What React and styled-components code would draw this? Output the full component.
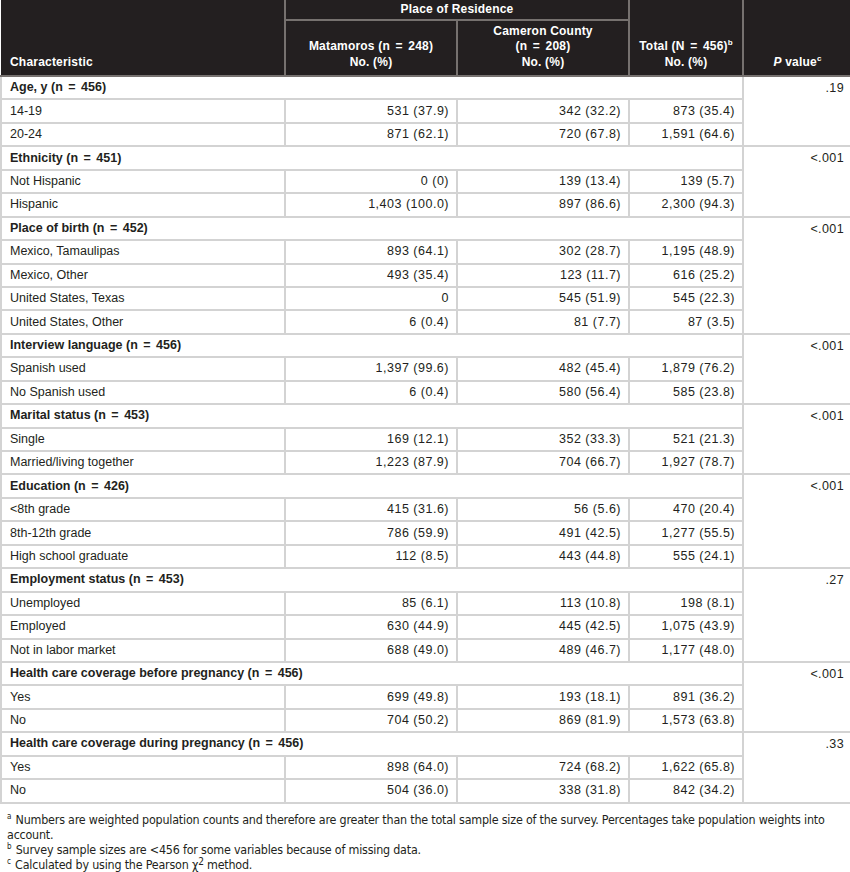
import React from 'react';
import styled, { createGlobalStyle } from 'styled-components';

const groups = [
  { title: 'Age, y (n = 456)', p: '.19', rows: [
    ['14-19', '531 (37.9)', '342 (32.2)', '873 (35.4)'],
    ['20-24', '871 (62.1)', '720 (67.8)', '1,591 (64.6)'],
  ] },
  { title: 'Ethnicity (n = 451)', p: '<.001', rows: [
    ['Not Hispanic', '0 (0)', '139 (13.4)', '139 (5.7)'],
    ['Hispanic', '1,403 (100.0)', '897 (86.6)', '2,300 (94.3)'],
  ] },
  { title: 'Place of birth (n = 452)', p: '<.001', rows: [
    ['Mexico, Tamaulipas', '893 (64.1)', '302 (28.7)', '1,195 (48.9)'],
    ['Mexico, Other', '493 (35.4)', '123 (11.7)', '616 (25.2)'],
    ['United States, Texas', '0', '545 (51.9)', '545 (22.3)'],
    ['United States, Other', '6 (0.4)', '81 (7.7)', '87 (3.5)'],
  ] },
  { title: 'Interview language (n = 456)', p: '<.001', rows: [
    ['Spanish used', '1,397 (99.6)', '482 (45.4)', '1,879 (76.2)'],
    ['No Spanish used', '6 (0.4)', '580 (56.4)', '585 (23.8)'],
  ] },
  { title: 'Marital status (n = 453)', p: '<.001', rows: [
    ['Single', '169 (12.1)', '352 (33.3)', '521 (21.3)'],
    ['Married/living together', '1,223 (87.9)', '704 (66.7)', '1,927 (78.7)'],
  ] },
  { title: 'Education (n = 426)', p: '<.001', rows: [
    ['<8th grade', '415 (31.6)', '56 (5.6)', '470 (20.4)'],
    ['8th-12th grade', '786 (59.9)', '491 (42.5)', '1,277 (55.5)'],
    ['High school graduate', '112 (8.5)', '443 (44.8)', '555 (24.1)'],
  ] },
  { title: 'Employment status (n = 453)', p: '.27', rows: [
    ['Unemployed', '85 (6.1)', '113 (10.8)', '198 (8.1)'],
    ['Employed', '630 (44.9)', '445 (42.5)', '1,075 (43.9)'],
    ['Not in labor market', '688 (49.0)', '489 (46.7)', '1,177 (48.0)'],
  ] },
  { title: 'Health care coverage before pregnancy (n = 456)', p: '<.001', rows: [
    ['Yes', '699 (49.8)', '193 (18.1)', '891 (36.2)'],
    ['No', '704 (50.2)', '869 (81.9)', '1,573 (63.8)'],
  ] },
  { title: 'Health care coverage during pregnancy (n = 456)', p: '.33', rows: [
    ['Yes', '898 (64.0)', '724 (68.2)', '1,622 (65.8)'],
    ['No', '504 (36.0)', '338 (31.8)', '842 (34.2)'],
  ] },
];

const GlobalStyle = createGlobalStyle`
  body {
    margin: 0;
    background: #fff;
    color: #231f20;
    font-family: 'Liberation Sans', Arial, sans-serif;
  }
`;

const Table = styled.table`
  width: 850px;
  table-layout: fixed;
  border-collapse: collapse;
  font-size: 12.5px;
`;

const HeadCell = styled.th`
  background: #231f20;
  color: #fff;
  font-size: 12px;
  font-weight: 700;
  letter-spacing: 0.2px;
  line-height: 15.5px;
  border: 2px solid #76716f;
  border-top: none;
  padding: 0 6px 5px;
  vertical-align: ${(p) => (p.$middle ? 'middle' : 'bottom')};
  text-align: ${(p) => p.$align || 'center'};
  height: ${(p) => p.$h || 'auto'};
  &:first-child { border-left: none; }
  &:last-child { border-right: none; }
`;

const Row = styled.tr`
  height: 23.45px;
`;

const Cell = styled.td`
  border: 2px solid #d3d3d3;
  padding: 0 7px 0 8px;
  line-height: 15px;
  text-align: ${(p) => (p.$num ? 'right' : 'left')};
  font-weight: ${(p) => (p.$bold ? 700 : 400)};
  letter-spacing: ${(p) => (p.$num ? '0.5px' : '0')};
  white-space: nowrap;
  vertical-align: middle;
`;

const PCell = styled.td`
  border: 2px solid #d3d3d3;
  border-right: none;
  padding: 4px 7px 0;
  text-align: right;
  vertical-align: top;
  line-height: 15px;
  letter-spacing: 0.4px;
`;

const Eq = styled.span`
  padding: 0 2px;
`;

const Sup = styled.sup`
  font-size: ${(p) => p.$size || '8px'};
  line-height: 0;
  vertical-align: ${(p) => p.$up || '5px'};
  margin-right: ${(p) => p.$gap || '0'};
`;

const Notes = styled.div`
  padding: 8px 0 0 7px;
  font-family: 'DejaVu Sans Condensed', 'DejaVu Sans', sans-serif;
  font-stretch: condensed;
  font-size: 12.4px;
  letter-spacing: -0.2px;
  line-height: 15px;
  color: #231f20;
`;

const Note = styled.p`
  margin: 0;
`;

// puts the wide spacing around "=" that the printed table has
const withEq = (text) => {
  const parts = text.split(' = ');
  if (parts.length < 2) return text;
  return (
    <>
      {parts[0]} <Eq>=</Eq> {parts[1]}
    </>
  );
};

const App = () => {
  return (
    <>
      <GlobalStyle />
      <Table>
        <colgroup>
          <col style={{ width: 284 }} />
          <col style={{ width: 172 }} />
          <col style={{ width: 172 }} />
          <col style={{ width: 114 }} />
          <col style={{ width: 108 }} />
        </colgroup>
        <thead>
          <tr>
            <HeadCell rowSpan={2} $align="left" style={{ paddingLeft: 9 }}>Characteristic</HeadCell>
            <HeadCell colSpan={2} $middle $h="19px" style={{ paddingBottom: 0 }}>Place of Residence</HeadCell>
            <HeadCell rowSpan={2}>Total (N <Eq>=</Eq> 456)<Sup>b</Sup><br />No. (%)</HeadCell>
            <HeadCell rowSpan={2}><i>P</i> value<Sup>c</Sup></HeadCell>
          </tr>
          <tr>
            <HeadCell $h="49px">Matamoros (n <Eq>=</Eq> 248)<br />No. (%)</HeadCell>
            <HeadCell>Cameron County<br />(n <Eq>=</Eq> 208)<br />No. (%)</HeadCell>
          </tr>
        </thead>
        <tbody>
          {groups.map((g) => (
            <React.Fragment key={g.title}>
              <Row>
                <Cell colSpan={4} $bold>{withEq(g.title)}</Cell>
                <PCell rowSpan={g.rows.length + 1}>{g.p}</PCell>
              </Row>
              {g.rows.map((r) => (
                <Row key={r[0]}>
                  <Cell>{r[0]}</Cell>
                  <Cell $num>{r[1]}</Cell>
                  <Cell $num>{r[2]}</Cell>
                  <Cell $num>{r[3]}</Cell>
                </Row>
              ))}
            </React.Fragment>
          ))}
        </tbody>
      </Table>
      <Notes>
        <Note><Sup $gap="1px">a</Sup> Numbers are weighted population counts and therefore are greater than the total sample size of the survey. Percentages take population weights into account.</Note>
        <Note><Sup $gap="1px">b</Sup> Survey sample sizes are &lt;456 for some variables because of missing data.</Note>
        <Note><Sup $gap="1px">c</Sup> Calculated by using the Pearson χ<Sup $up="4px" $size="10px">2</Sup> method.</Note>
      </Notes>
    </>
  );
};

export default App;
